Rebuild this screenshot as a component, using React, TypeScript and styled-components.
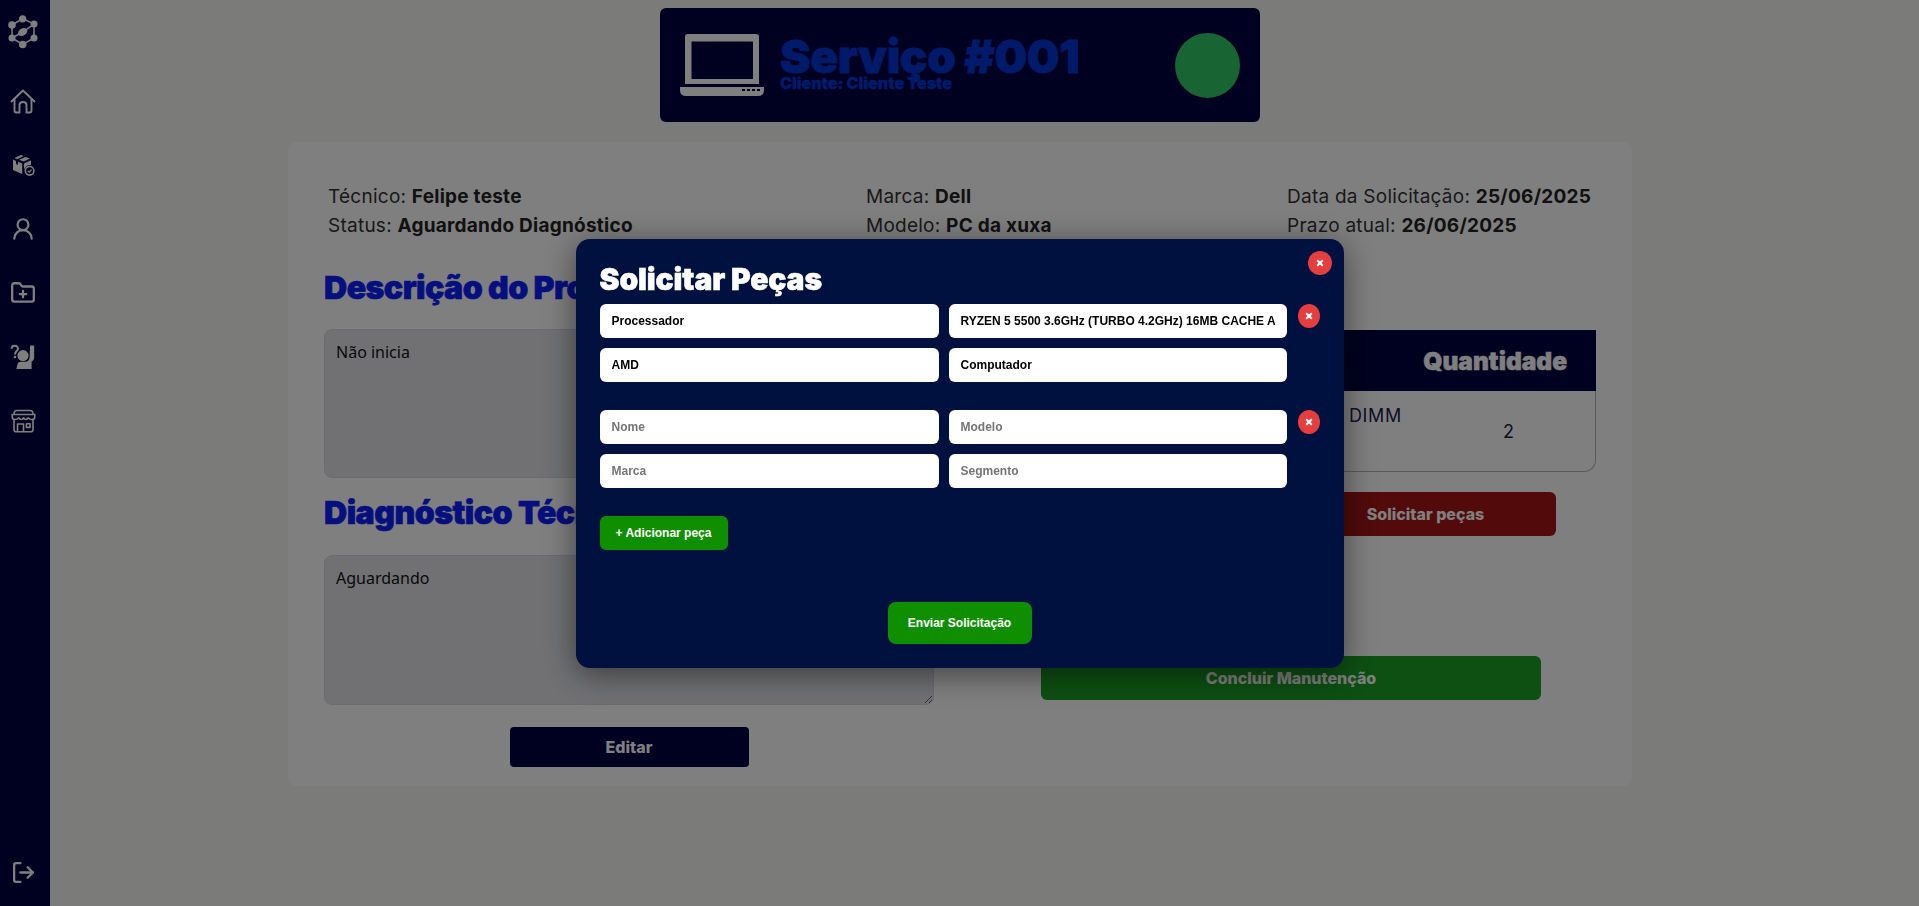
import React from "react";
import styled, { createGlobalStyle } from "styled-components";
import { UserRound, FolderPlus, LogOut } from "lucide-react";

const Global = createGlobalStyle`
  html, body { margin: 0; padding: 0; height: 100%; background: #f6f6f3; overflow: hidden; }
  * { box-sizing: border-box; }
  #root { height: 100%; }
`;

const Shell = styled.div`
  display: flex;
  height: 906px;
  font-family: Inter, "Liberation Sans", sans-serif;
`;

const Sidebar = styled.aside`
  width: 50px;
  flex: none;
  background: #000040;
  color: #fff;
  display: flex;
  flex-direction: column;
  align-items: center;
  padding: 15px 4px 2px 0;
`;

const Logo = styled.svg`
  width: 32px;
  height: 34px;
  margin-bottom: 20px;
`;

const NavItem = styled.div`
  height: 64px;
  width: 100%;
  display: flex;
  align-items: center;
  justify-content: center;
`;

const Exit = styled(NavItem)`
  margin-top: auto;
`;

const Content = styled.main`
  flex: 1;
  padding: 8px 49px 0 0;
  display: flex;
  flex-direction: column;
  align-items: center;
  gap: 20px;
`;

const ServiceHeader = styled.header`
  width: 600px;
  height: 114px;
  background: #000040;
  border-radius: 6px;
  display: flex;
  align-items: center;
  padding: 0 20px 0 20px;
  gap: 16px;
`;

const Titles = styled.div`
  display: flex;
  flex-direction: column;
  margin-top: -4px;
`;

const ServiceTitle = styled.h1`
  margin: 0;
  font-size: 46px;
  line-height: 44px;
  font-weight: 900;
  color: #0434d4;
  letter-spacing: -0.4px;
  -webkit-text-stroke: 0.8px #0434d4;
`;

const ServiceClient = styled.p`
  margin: -3px 0 0;
  font-size: 16px;
  line-height: 17px;
  font-weight: 900;
  color: #0434d4;
  -webkit-text-stroke: 0.3px #0434d4;
`;

const StatusDot = styled.span`
  width: 65px;
  height: 65px;
  border-radius: 50%;
  background: #30c866;
  margin-left: auto;
`;

const Card = styled.section`
  width: 1344px;
  height: 644px;
  background: #fff;
  border-radius: 8px;
  padding: 40px 36px 19px;
`;

const InfoGrid = styled.div`
  display: grid;
  grid-template-columns: 538px 421px 1fr;
  padding-left: 4px;
  font-size: 19px;
  line-height: 29px;
  letter-spacing: 0.25px;
  color: #333;
  height: 55px;
`;

const InfoColumn = styled.div`
  display: flex;
  flex-direction: column;
  white-space: nowrap;
  b { font-weight: 700; color: #222; }
`;

const Columns = styled.div`
  display: grid;
  grid-template-columns: 610px 610px;
  column-gap: 52px;
  margin-top: 31px;
`;

const Column = styled.div`
  display: flex;
  flex-direction: column;
`;

const SectionTitle = styled.h2`
  margin: 0 0 21px;
  height: 40px;
  font-size: 32px;
  line-height: 40px;
  font-weight: 900;
  color: #0c1efc;
  letter-spacing: -0.5px;
  white-space: nowrap;
  -webkit-text-stroke: 0.7px #0c1efc;
`;

const SecondTitle = styled(SectionTitle)`
  margin: 15px 0 22px;
`;

const NoteArea = styled.textarea<{ $h: number }>`
  width: 100%;
  height: ${(p) => p.$h}px;
  background: #e2e3e9;
  border: 1px solid #d8d9e0;
  border-radius: 8px;
  padding: 11px;
  font-family: "Noto Sans", sans-serif;
  font-size: 16px;
  color: #111;
  outline: none;
`;

const EditButton = styled.button`
  align-self: center;
  width: 239px;
  height: 40px;
  margin-top: 22px;
  border: none;
  border-radius: 4px;
  background: #000040;
  color: #fff;
  font-family: Inter, sans-serif;
  font-weight: 800;
  font-size: 16px;
`;

const PartsTable = styled.div`
  margin-top: 62px;
  height: 142px;
  border: 1px solid #b5b5b5;
  border-top: none;
  border-radius: 0 0 12px 12px;
  display: flex;
  flex-direction: column;
`;

const TableHead = styled.div`
  height: 61px;
  margin: 0 -1px;
  background: #000040;
  color: #fff;
  display: flex;
  align-items: center;
  justify-content: flex-end;
  padding-right: 29px;
  font-size: 24.5px;
  font-weight: 900;
  letter-spacing: 0;
  -webkit-text-stroke: 0.5px #fff;
`;

const TableRow = styled.div`
  flex: 1;
  display: flex;
  justify-content: flex-end;
  align-items: center;
  font-size: 18px;
  color: #20204a;
`;

const NameCell = styled.span`
  align-self: flex-start;
  width: 73px;
  margin-top: 14px;
  letter-spacing: 0.6px;
`;

const QtyCell = styled.span`
  width: 173px;
  text-align: center;
`;

const ActionRow = styled.div`
  display: flex;
  justify-content: center;
  gap: 8px;
  margin-top: 20px;
`;

const ActionSlot = styled.div`
  width: 261px;
`;

const RequestButton = styled.button`
  width: 261px;
  height: 44px;
  border: none;
  border-radius: 6px;
  background: #a41414;
  color: #fff;
  font-family: Inter, sans-serif;
  font-weight: 800;
  font-size: 16px;
`;

const FinishButton = styled.button`
  align-self: center;
  width: 500px;
  height: 44px;
  margin-top: 120px;
  border: none;
  border-radius: 6px;
  background: #1aa024;
  color: #fff;
  font-family: Inter, sans-serif;
  font-weight: 800;
  font-size: 16px;
`;

const Overlay = styled.div`
  position: fixed;
  inset: 0;
  background: rgba(0, 0, 0, 0.5);
  display: flex;
  align-items: center;
  justify-content: center;
`;

const Modal = styled.div`
  position: relative;
  width: 768px;
  height: 429px;
  background: #00103f;
  border-radius: 14px;
  padding: 24px;
  box-shadow: 0 6px 32px rgba(0, 0, 0, 0.5);
  font-family: "Liberation Sans", Arial, sans-serif;
  display: flex;
  flex-direction: column;
`;

const CloseButton = styled.button`
  position: absolute;
  top: 12px;
  right: 12px;
  width: 24px;
  height: 24px;
  padding: 0;
  border: none;
  border-radius: 50%;
  background: #e53e3e;
  display: flex;
  align-items: center;
  justify-content: center;
`;

const RemoveButton = styled(CloseButton)`
  position: static;
  flex: none;
  width: 22px;
`;

const ModalTitle = styled.h2`
  margin: 0 0 7px;
  height: 34px;
  font-family: Inter, sans-serif;
  font-size: 30px;
  line-height: 32px;
  font-weight: 900;
  color: #fff;
  letter-spacing: -0.1px;
  -webkit-text-stroke: 0.6px #fff;
`;

const PartBlock = styled.div`
  display: flex;
  align-items: flex-start;
  gap: 11px;
  margin-bottom: 28px;
`;

const PartGrid = styled.div`
  display: grid;
  grid-template-columns: 339px 338px;
  gap: 10px;
`;

const PartInput = styled.input`
  width: 100%;
  height: 34px;
  border: none;
  border-radius: 6px;
  background: #fff;
  padding: 0 12px;
  font-family: "Liberation Sans", Arial, sans-serif;
  font-size: 12px;
  font-weight: 700;
  color: #000;
  outline: none;
  &::placeholder { color: #757575; }
`;

const AddButton = styled.button`
  align-self: flex-start;
  width: 128px;
  height: 34px;
  border: none;
  border-radius: 6px;
  background: #0f8f00;
  color: #fff;
  font-family: "Liberation Sans", Arial, sans-serif;
  font-size: 12px;
  font-weight: 700;
`;

const SendButton = styled.button`
  align-self: center;
  width: 144px;
  height: 42px;
  margin-top: 52px;
  border: none;
  border-radius: 8px;
  background: #0f8f00;
  color: #fff;
  font-family: "Liberation Sans", Arial, sans-serif;
  font-size: 12px;
  font-weight: 700;
`;

const X = () => (
  <svg width="8" height="8" viewBox="0 0 8 8" aria-hidden="true">
    <path d="M1.2 1.2 L6.8 6.8 M6.8 1.2 L1.2 6.8" stroke="#fff" strokeWidth="2" fill="none" />
  </svg>
);

const LogoMark = () => (
  <Logo viewBox="0 0 32 34" aria-hidden="true">
    <path
      stroke="#fff"
      strokeWidth="1.5"
      fill="none"
      d="M5 10 L15.7 3.5 L27 9 L15.7 17 L5 23 V10 M27 9 V23 L15.7 29.5 L5 23"
    />
    <g fill="#fff">
      <circle cx="15.7" cy="3.8" r="3.6" />
      <circle cx="27" cy="9" r="3.5" />
      <circle cx="5" cy="10" r="3.8" />
      <ellipse cx="15.7" cy="17" rx="5" ry="3.6" transform="rotate(-32 15.7 17)" />
      <circle cx="5" cy="23" r="3.5" />
      <circle cx="27" cy="23" r="3.5" />
      <circle cx="15.7" cy="29.5" r="3.8" />
    </g>
  </Logo>
);

const HomeIcon = () => (
  <svg width="26" height="25" viewBox="0 0 26 25" aria-hidden="true" fill="none" stroke="#fff" strokeWidth="1.9" strokeLinecap="round" strokeLinejoin="round">
    <path d="M1.5 12.5 L13 1.5 L24.5 12.5" />
    <path d="M4.5 10 V21.5 Q4.5 23.5 6.5 23.5 H9.5 V16 Q9.5 13 13 13 Q16.5 13 16.5 16 V23.5 H19.5 Q21.5 23.5 21.5 21.5 V10" />
  </svg>
);

const BoxCheck = () => (
  <svg width="24" height="24" viewBox="0 0 24 24" aria-hidden="true">
    <path fill="#fff" d="M10 2 L12.8 3.1 L6.2 6.2 L3.4 5 Z M14.6 3.9 L19 5.6 L12.6 8.6 L8 6.8 Z" />
    <path fill="#fff" d="M2 6.6 L5 7.9 V11 L7 11.8 V8.8 L11.2 10.6 V21 L2 17 Z" />
    <path fill="#fff" d="M13 10.4 L20 7.2 V12.2 A6 6 0 0 0 13 18 Z" />
    <circle cx="18.6" cy="17.8" r="4.3" fill="none" stroke="#fff" strokeWidth="1.6" />
    <path d="M16.7 17.8 L18.2 19.2 L20.6 16.6" stroke="#fff" strokeWidth="1.3" fill="none" />
  </svg>
);

const RaisedHand = () => (
  <svg width="26" height="26" viewBox="0 0 26 26" aria-hidden="true">
    <path d="M1.6 4.8 C1.6 0.8 8 0.8 8 4.6 C8 7.2 5 7 5 10.4" stroke="#fff" strokeWidth="2" fill="none" />
    <circle cx="5" cy="13" r="1.3" fill="#fff" />
    <circle cx="13" cy="11.6" r="5.6" fill="#fff" />
    <path fill="#fff" d="M20 1.6 H24.2 V13 C24.2 15.4 23 17 21.6 17.6 V25 H6.4 L7.4 20.4 C8 18.4 9.4 17.8 11 17.8 H15 C17.6 17.8 19.4 16 19.6 13.4 Z" />
  </svg>
);

const StoreIcon = () => (
  <svg width="25" height="24" viewBox="0 0 25 24" aria-hidden="true" fill="none" stroke="#fff" strokeWidth="1.6" strokeLinejoin="round">
    <path d="M3 5 Q3 1.5 6 1.5 H19 Q22 1.5 22 5" />
    <path d="M1.2 5.5 H23.8 V8 Q23.8 10.5 21 10.5 Q18.4 10.5 17.4 8.8 Q16.2 10.5 14.9 10.5 Q13.2 10.5 12.5 8.8 Q11.8 10.5 10.1 10.5 Q8.8 10.5 7.6 8.8 Q6.6 10.5 4 10.5 Q1.2 10.5 1.2 8 Z" />
    <path d="M3 11 V20.5 Q3 22.8 5.2 22.8 H19.8 Q22 22.8 22 20.5 V11" />
    <path d="M6.5 22.8 V15 H12.5 V22.8" />
    <rect x="15.4" y="14.8" width="3.6" height="3.6" />
  </svg>
);

const Laptop = () => (
  <svg width="84" height="62" viewBox="0 0 84 62" style={{ flex: "none" }} aria-hidden="true">
    <path fill="#fff" fillRule="evenodd" d="M8 0 H76 Q79 0 79 3 V50 H5 V3 Q5 0 8 0 Z M11.5 7.5 V45 H73 V7.5 Z" />
    <path fill="#fff" d="M0 53 H84 V56 Q84 62 78 62 H6 Q0 62 0 56 Z" />
    <g fill="#000040">
      <rect x="62" y="55" width="3" height="2" />
      <rect x="67" y="55" width="3" height="2" />
      <rect x="72" y="55" width="3" height="2" />
      <rect x="77" y="55" width="3" height="2" />
    </g>
  </svg>
);

const parts = [
  { nome: "Processador", modelo: "RYZEN 5 5500 3.6GHz (TURBO 4.2GHz) 16MB CACHE AM4", marca: "AMD", segmento: "Computador" },
  { nome: "", modelo: "", marca: "", segmento: "" },
];

export default function App() {
  return (
    <Shell>
      <Global />
      <Sidebar>
        <LogoMark />
        <NavItem><HomeIcon /></NavItem>
        <NavItem><BoxCheck /></NavItem>
        <NavItem><UserRound size={26} strokeWidth={2} /></NavItem>
        <NavItem><FolderPlus size={26} strokeWidth={2.1} /></NavItem>
        <NavItem><RaisedHand /></NavItem>
        <NavItem><StoreIcon /></NavItem>
        <Exit><LogOut size={25} strokeWidth={2.2} /></Exit>
      </Sidebar>
      <Content>
        <ServiceHeader>
          <Laptop />
          <Titles>
            <ServiceTitle>Serviço #001</ServiceTitle>
            <ServiceClient>Cliente: Cliente Teste</ServiceClient>
          </Titles>
          <StatusDot />
        </ServiceHeader>
        <Card>
          <InfoGrid>
            <InfoColumn>
              <span>Técnico: <b>Felipe teste</b></span>
              <span>Status: <b>Aguardando Diagnóstico</b></span>
            </InfoColumn>
            <InfoColumn>
              <span>Marca: <b>Dell</b></span>
              <span>Modelo: <b>PC da xuxa</b></span>
            </InfoColumn>
            <InfoColumn>
              <span>Data da Solicitação: <b>25/06/2025</b></span>
              <span>Prazo atual: <b>26/06/2025</b></span>
            </InfoColumn>
          </InfoGrid>
          <Columns>
            <Column>
              <SectionTitle>Descrição do Problema</SectionTitle>
              <NoteArea $h={149} readOnly value="Não inicia" />
              <SecondTitle>Diagnóstico Técnico</SecondTitle>
              <NoteArea $h={150} readOnly value="Aguardando" />
              <EditButton>Editar</EditButton>
            </Column>
            <Column>
              <PartsTable>
                <TableHead>Quantidade</TableHead>
                <TableRow>
                  <NameCell>DIMM</NameCell>
                  <QtyCell>2</QtyCell>
                </TableRow>
              </PartsTable>
              <ActionRow>
                <ActionSlot />
                <RequestButton>Solicitar peças</RequestButton>
              </ActionRow>
              <FinishButton>Concluir Manutenção</FinishButton>
            </Column>
          </Columns>
        </Card>
      </Content>
      <Overlay>
        <Modal>
          <CloseButton aria-label="Fechar"><X /></CloseButton>
          <ModalTitle>Solicitar Peças</ModalTitle>
          {parts.map((p, i) => (
            <PartBlock key={i}>
              <PartGrid>
                <PartInput readOnly placeholder="Nome" value={p.nome} />
                <PartInput readOnly placeholder="Modelo" value={p.modelo} />
                <PartInput readOnly placeholder="Marca" value={p.marca} />
                <PartInput readOnly placeholder="Segmento" value={p.segmento} />
              </PartGrid>
              <RemoveButton aria-label="Remover"><X /></RemoveButton>
            </PartBlock>
          ))}
          <AddButton>+ Adicionar peça</AddButton>
          <SendButton>Enviar Solicitação</SendButton>
        </Modal>
      </Overlay>
    </Shell>
  );
}
